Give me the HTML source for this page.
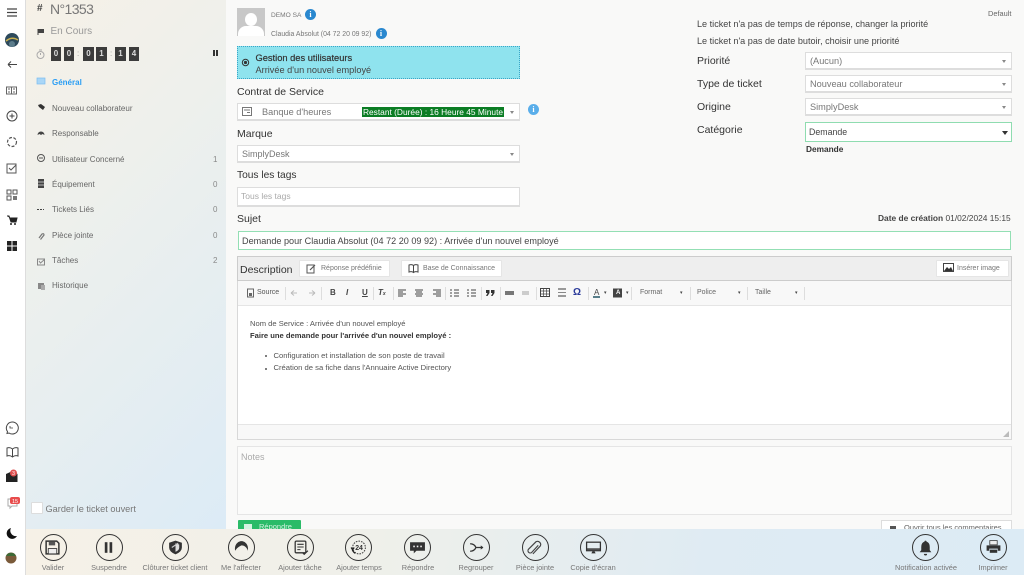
<!DOCTYPE html>
<html><head><meta charset="utf-8"><style>
html,body{margin:0;padding:0}
body{width:1024px;height:575px;overflow:hidden;position:relative;background:#f9f9f8;font-family:"Liberation Sans",sans-serif;color:#333}
.a,.t,.sel,svg.i{position:absolute}
.t{white-space:nowrap;line-height:12px}
.nav{font-size:8px;color:#666;left:52px}
.n{font-size:8px;color:#888;left:213px}
.lb{font-size:10.5px;color:#333;left:237px}
.lr{font-size:10.5px;color:#333;left:697px}
.sel{background:#fff;border:1px solid #ddd;border-bottom:2px solid #ddd;box-sizing:border-box;font-size:9.2px;color:#777;line-height:16px;padding-left:4px;white-space:nowrap}
.sel:after{content:"";position:absolute;right:5px;top:7px;border:2px solid transparent;border-top:3px solid #888;border-bottom:0}
.btn{position:absolute;background:#fff;border:1px solid #e5e5e5;box-sizing:border-box;font-size:7px;color:#777;line-height:16px;white-space:nowrap;border-radius:1px}
.c{position:absolute;top:534px;width:27px;height:27px;border:1.4px solid #333;border-radius:50%;box-sizing:border-box}
.c svg{position:absolute;left:3.600px;top:3.600px;width:17px;height:17px}
.bl{position:absolute;top:563px;font-size:7.400px;line-height:10px;color:#777;white-space:nowrap;transform:translateX(-50%)}
.tb{position:absolute;top:288px;font-size:8px;line-height:10px;color:#444;font-weight:bold;white-space:nowrap}
.sp{position:absolute;top:287px;width:1px;height:13px;background:#ddd}
.dg{position:absolute;top:47px;height:14px;background:#3c3c3c;color:#ddd;font-size:8px;font-weight:bold;line-height:14px;text-align:center}
</style></head><body>

<!-- left rail -->
<div class="a" style="left:0;top:0;width:25px;height:575px;background:#fff;border-right:1px solid #ddd"></div>
<svg class="i" style="left:0;top:0" width="25" height="575">
<path d="M7 9h10M7 12.500h10M7 16h10" stroke="#444" stroke-width="1.200" fill="none"/>
<circle cx="12" cy="40" r="7" fill="#2d4a5c"/><path d="M6 41q6-5 12-1" stroke="#c9b050" stroke-width="1.500" fill="none"/><circle cx="12" cy="44" r="3" fill="#5c7d8c"/>
<path d="M8 64.500h9M8 64.500l3-3M8 64.500l3 3" stroke="#444" fill="none"/>
<rect x="6.500" y="87" width="10" height="7" fill="none" stroke="#666"/><path d="M11.500 87v7M8 89h2M8 92h2M13 89h2M13 92h2" stroke="#666"/>
<circle cx="12" cy="116" r="5" fill="none" stroke="#444"/><path d="M9.500 116h5M12 113.500v5" stroke="#444"/>
<circle cx="12" cy="142" r="4.500" fill="none" stroke="#555" stroke-dasharray="3 1.500" stroke-width="1.200"/>
<rect x="7" y="164" width="9" height="9" fill="none" stroke="#555"/><path d="M9 168l2 2 5-5" stroke="#555" fill="none"/>
<rect x="7" y="190" width="4" height="4" fill="none" stroke="#555"/><rect x="13" y="190" width="4" height="4" fill="none" stroke="#555"/><rect x="7" y="196" width="4" height="4" fill="none" stroke="#555"/><rect x="13" y="196" width="4" height="4" fill="#777"/>
<path d="M7 216h2l2 6h5l1-4h-7" fill="#222" stroke="#222"/><circle cx="11" cy="224" r="1" fill="#222"/><circle cx="15" cy="224" r="1" fill="#222"/>
<path d="M7 241h4.500v4.500H7zM12.500 241H17v4.500h-4.500zM7 246.500h4.500V251H7zM12.500 246.500H17V251h-4.500z" fill="#222"/>
<path d="M12 422a6 6 0 1 1-3 11l-2 .5.5-2A6 6 0 0 1 12 422z" fill="none" stroke="#444"/><path d="M10 426v2h3" stroke="#444" fill="none" stroke-width=".8"/>
<path d="M7 448q3-1 5.500 1q2.500-2 5.500-1v8q-3-1-5.500 1q-2.500-2-5.500-1z M12.500 449v8" fill="none" stroke="#444"/>
<path d="M6 474l6.500-3 5 3v8H6z" fill="#222"/>
<path d="M8 499h9v7h-5l-2 2v-2H8z" fill="none" stroke="#aaa"/>
<path d="M11 528a5.500 5.500 0 1 0 6 8 5.500 5.500 0 0 1-6-8z" fill="#111"/>
<circle cx="11" cy="558" r="5.500" fill="#7a5a3a"/><path d="M6 556a5.500 5.500 0 0 1 10 0z" fill="#3c6a36"/>
<circle cx="13.500" cy="473" r="3.500" fill="#e05050"/><rect x="10" y="497" width="10" height="7" rx="2" fill="#e84c4c"/>
<text x="13.500" y="475" font-size="5" fill="#fff" text-anchor="middle" font-family="Liberation Sans">3</text>
<text x="15" y="503" font-size="5.500" fill="#fff" text-anchor="middle" font-family="Liberation Sans">15</text>
</svg>

<!-- ticket panel -->
<div class="a" style="left:26px;top:0;width:200px;height:529px;background:linear-gradient(135deg,#f6f1e7 0%,#eef0ec 35%,#dcebf6 100%)"></div>
<div class="t" style="left:37px;top:3px;font-size:10px;color:#444;font-weight:bold">#</div>
<div class="t" style="left:50px;top:2px;font-size:14px;line-height:14px;color:#777;letter-spacing:-.6px">N°1353</div>
<div class="t" style="left:50.500px;top:26px;font-size:10px;color:#999">En Cours</div>
<svg class="i" style="left:37px;top:28px" width="10" height="8"><path d="M1 1v6" stroke="#444"/><path d="M1 1h6v4H1z" fill="#444"/></svg>
<svg class="i" style="left:36px;top:49px" width="10" height="11"><circle cx="4.500" cy="6" r="3.500" fill="none" stroke="#aaa"/><path d="M3 1h3M4.500 4v2" stroke="#aaa"/></svg>
<div class="dg" style="left:51px;width:10px">0</div>
<div class="dg" style="left:64px;width:10px">0</div>
<div class="dg" style="left:83px;width:11px">0</div>
<div class="dg" style="left:96px;width:11px">1</div>
<div class="dg" style="left:115px;width:11px">1</div>
<div class="dg" style="left:129px;width:10px">4</div>
<div class="t" style="left:77px;top:48px;font-size:8px;color:#999">:</div>
<div class="t" style="left:110px;top:48px;font-size:8px;color:#999">:</div>
<div class="a" style="left:212.500px;top:50px;width:2px;height:6px;background:#333"></div>
<div class="a" style="left:216px;top:50px;width:2px;height:6px;background:#333"></div>

<div class="t nav" style="top:77px;color:#2a9df4;font-weight:bold">Général</div>
<div class="t nav" style="top:103px">Nouveau collaborateur</div>
<div class="t nav" style="top:128px">Responsable</div>
<div class="t nav" style="top:154px">Utilisateur Concerné</div>
<div class="t nav" style="top:179px">Équipement</div>
<div class="t nav" style="top:204px">Tickets Liés</div>
<div class="t nav" style="top:230px">Pièce jointe</div>
<div class="t nav" style="top:255px">Tâches</div>
<div class="t nav" style="top:280px">Historique</div>
<div class="t n" style="top:154px">1</div>
<div class="t n" style="top:179px">0</div>
<div class="t n" style="top:204px">0</div>
<div class="t n" style="top:230px">0</div>
<div class="t n" style="top:255px">2</div>
<svg class="i" style="left:36px;top:76px" width="12" height="220">
<rect x="1" y="2" width="8" height="6" fill="#a9d6f7" stroke="#7cbdf0" stroke-width=".7"/>
<path d="M2 29l3-1 4 3-2 3-4-3z" fill="#333"/>
<path d="M1.500 59a3.500 3.500 0 0 1 7 0l-2-1-1.500 1-1.500-1z" fill="#444"/>
<circle cx="5" cy="82" r="3.500" fill="none" stroke="#555"/><path d="M3 82h4" stroke="#555"/>
<rect x="2" y="103" width="6" height="9" fill="#444"/><path d="M2 106h6M2 109h6" stroke="#ddd" stroke-width=".7"/>
<path d="M1 133.500h7" stroke="#444" stroke-dasharray="2 1"/>
<path d="M3 162l3-4q2-1 2 1l-3.500 4.500" fill="none" stroke="#777" stroke-width="1.200"/>
<rect x="1.500" y="183" width="7" height="6" fill="none" stroke="#888"/><path d="M3 185l1.500 2 4-3.500" fill="none" stroke="#888"/>
<rect x="2" y="207" width="6" height="6" fill="#888"/><path d="M5 209h4v5H5z" fill="#aaa"/>
</svg>
<div class="a" style="left:31px;top:502px;width:10px;height:10px;background:#fff;border:1px solid #ddd;border-radius:1px"></div>
<div class="t" style="left:45.500px;top:503px;font-size:9.200px;color:#777">Garder le ticket ouvert</div>

<!-- customer block -->
<div class="a" style="left:237px;top:8px;width:28px;height:28px;background:#c8c8c8;overflow:hidden"><div class="a" style="left:8px;top:5px;width:12px;height:13px;background:#fff;border-radius:50%"></div><div class="a" style="left:1px;top:18px;width:26px;height:14px;background:#fff;border-radius:8px 8px 0 0"></div></div>
<div class="t" style="left:271px;top:10px;font-size:6.600px;color:#777">DEMO SA</div>
<div class="t" style="left:271px;top:29px;font-size:6.900px;color:#777">Claudia Absolut (04 72 20 09 92)</div>
<div class="a" style="left:305px;top:9px;width:11px;height:11px;background:#2a88cf;border-radius:50%;color:#fff;font:bold 8px/11px 'Liberation Serif',serif;text-align:center">i</div>
<div class="a" style="left:375.500px;top:28px;width:11px;height:11px;background:#2a88cf;border-radius:50%;color:#fff;font:bold 8px/11px 'Liberation Serif',serif;text-align:center">i</div>

<div class="a" style="left:237px;top:46px;width:283px;height:33px;background:#8fe3ee;border:1px dotted #3aa6c8;box-sizing:border-box"></div>
<div class="t" style="left:255.500px;top:52px;font-size:9.300px;color:#333;-webkit-text-stroke:.2px #333">Gestion des utilisateurs</div>
<div class="t" style="left:255.500px;top:64px;font-size:9.200px;color:#444">Arrivée d'un nouvel employé</div>
<svg class="i" style="left:241px;top:58px" width="9" height="9"><circle cx="4.500" cy="4.500" r="3.200" fill="none" stroke="#333"/><circle cx="4.500" cy="4.500" r="1.600" fill="#333"/></svg>

<div class="t lb" style="top:86px">Contrat de Service</div>
<div class="sel" style="left:237px;top:103px;width:283px;height:18px;padding-left:24px">Banque d'heures</div>
<svg class="i" style="left:242px;top:107px" width="11" height="10"><rect x=".5" y=".5" width="9" height="8" fill="none" stroke="#777"/><path d="M2 3h6M5 5.500h3" stroke="#777"/></svg>
<div class="a" style="left:362px;top:107px;width:142px;height:10px;background:#0b7d24;color:#fff;font-size:8.400px;line-height:10px;text-align:center;white-space:nowrap">Restant (Durée) : 16 Heure 45 Minute</div>
<div class="a" style="left:528px;top:104px;width:11px;height:11px;background:#5aaeea;border-radius:50%;color:#fff;font:bold 8px/11px 'Liberation Serif',serif;text-align:center">i</div>
<div class="t lb" style="top:128px">Marque</div>
<div class="sel" style="left:237px;top:145px;width:283px;height:18px;font-size:9px">SimplyDesk</div>
<div class="t lb" style="top:170px;font-size:10.200px">Tous les tags</div>
<div class="a" style="left:237px;top:187px;width:283px;height:20px;background:#fff;border:1px solid #ddd;border-bottom:2px solid #ddd;box-sizing:border-box;font-size:8.500px;line-height:17px;color:#aaa;padding-left:3px">Tous les tags</div>

<!-- right block -->
<div class="t" style="left:988px;top:8px;font-size:7.400px;color:#666">Default</div>
<div class="t" style="left:697px;top:18px;font-size:9.100px;color:#444">Le ticket n'a pas de temps de réponse, changer la priorité</div>
<div class="t" style="left:697px;top:35px;font-size:9.100px;color:#444">Le ticket n'a pas de date butoir, choisir une priorité</div>
<div class="t lr" style="top:55px">Priorité</div>
<div class="t lr" style="top:78px">Type de ticket</div>
<div class="t lr" style="top:101px">Origine</div>
<div class="t lr" style="top:124px">Catégorie</div>
<div class="sel" style="left:805px;top:52px;width:207px;height:18px">(Aucun)</div>
<div class="sel" style="left:805px;top:75px;width:207px;height:18px">Nouveau collaborateur</div>
<div class="sel" style="left:805px;top:98px;width:207px;height:18px">SimplyDesk</div>
<div class="a" style="left:805px;top:122px;width:207px;height:20px;background:#fff;border:1px solid #8fdcb0;box-sizing:border-box;font-size:8.800px;line-height:19px;color:#444;padding-left:3px">Demande</div>
<div class="a" style="left:1002px;top:131px;border:3px solid transparent;border-top:4px solid #333;border-bottom:0"></div>
<div class="t" style="left:806px;top:143px;font-size:8.300px;color:#333;font-weight:bold">Demande</div>
<div class="t" style="left:878px;top:212px;font-size:8.400px;color:#444"><b>Date de création</b> 01/02/2024 15:15</div>

<!-- subject -->
<div class="t lb" style="top:213px">Sujet</div>
<div class="a" style="left:238px;top:231px;width:773px;height:19px;background:#fff;border:1px solid #93dfb4;box-sizing:border-box;font-size:9.100px;line-height:18px;color:#444;padding-left:3px;white-space:nowrap">Demande pour Claudia Absolut (04 72 20 09 92) : Arrivée d'un nouvel employé</div>

<!-- editor -->
<div class="a" style="left:237px;top:256px;width:775px;height:184px;border:1px solid #d8d8d8;box-sizing:border-box;background:#fff"></div>
<div class="a" style="left:237px;top:256px;width:775px;height:25px;background:#eee;border:1px solid #ccc;box-sizing:border-box"></div>
<div class="a" style="left:238px;top:281px;width:773px;height:25px;background:#f8f8f8;border-bottom:1px solid #e5e5e5;box-sizing:border-box"></div>
<div class="a" style="left:238px;top:424px;width:773px;height:15px;background:#f8f8f8;border-top:1px solid #e5e5e5;box-sizing:border-box"></div>
<div class="t" style="left:240px;top:264px;font-size:10.500px;color:#333">Description</div>
<div class="btn" style="left:299px;top:260px;width:91px;height:17px;padding-left:21px">Réponse prédéfinie</div>
<div class="btn" style="left:401px;top:260px;width:101px;height:17px;padding-left:21px">Base de Connaissance</div>
<div class="btn" style="left:936px;top:260px;width:73px;height:17px;padding-left:20px">Insérer image</div>
<svg class="i" style="left:306px;top:263px" width="12" height="11"><rect x="1" y="2" width="7" height="8" fill="none" stroke="#555"/><path d="M4 7l5-5" stroke="#555" stroke-width="1.200"/></svg>
<svg class="i" style="left:408px;top:263px" width="12" height="11"><path d="M1 2q3-1 4.500 .5Q7 1 10 2v7q-3-1-4.500 .5Q4 8 1 9zM5.500 2.500v7" fill="none" stroke="#444"/></svg>
<svg class="i" style="left:943px;top:263px" width="12" height="10"><rect x=".5" y=".5" width="10" height="8" fill="none" stroke="#444"/><path d="M1 8l3-4 2 2 2-2 2 4z" fill="#333"/></svg>

<!-- toolbar -->
<svg class="i" style="left:238px;top:282px" width="570" height="22">
<rect x="9.500" y="7" width="6" height="8" fill="none" stroke="#666"/><path d="M11 11h3v3h-3z" fill="#666"/>
<path d="M53 11h6M53 11l3-2.500M53 11l3 2.500M77 11h-6M77 11l-3-2.500M77 11l-3 2.500" stroke="#bbb" fill="none"/>
<path d="M160 8h8M160 10h5M160 12h8M160 14h5M177 8h8M178 10h6M177 12h8M178 14h6M195 8h8M198 10h5M195 12h8M198 14h5" stroke="#444"/>
<path d="M212 8h2M216 8h5M212 11h2M216 11h5M212 14h2M216 14h5M229 8h2M233 8h5M229 11h2M233 11h5M229 14h2M233 14h5" stroke="#444"/>
<path d="M248 8h3.500v3l-2 3h-1.500l1.500-3h-1.500zM253 8h3.500v3l-2 3h-1.500l1.500-3H253z" fill="#333"/>
<path d="M267 9h9v4h-9z" fill="#777"/><path d="M284 9h7v4h-7z" fill="#ccc"/>
<rect x="302.500" y="6.500" width="9" height="8" fill="#fff" stroke="#444"/><path d="M302.500 9h9M302.500 12h9M305.500 6.500v8M308.500 6.500v8" stroke="#444" stroke-width=".7"/>
<path d="M320 6h8v2h-8zM320 13h8v2h-8z" fill="#999"/><path d="M320 10.500h8" stroke="#888"/>
<path d="M355 15h7" stroke="#256" stroke-width="1.500"/>
<rect x="375" y="6.500" width="9" height="9" fill="#444"/>
</svg>
<div class="tb" style="left:257px;font-weight:normal;font-size:7px;color:#555">Source</div>
<div class="tb" style="left:330px">B</div>
<div class="tb" style="left:346px;font-style:italic">I</div>
<div class="tb" style="left:362px;text-decoration:underline">U</div>
<div class="tb" style="left:378px;font-style:italic">T<span style="font-size:5px">x</span></div>
<div class="tb" style="left:573px;color:#2a3a9a;font-size:10px">Ω</div>
<div class="tb" style="left:594px;font-weight:normal">A</div>
<div class="tb" style="left:604px;font-size:5px;font-weight:normal">▾</div>
<div class="tb" style="left:626px;font-size:5px;font-weight:normal">▾</div>
<div class="tb" style="left:616px;font-size:6px;color:#fff">A</div>
<div class="tb" style="left:640px;font-weight:normal;font-size:7px;color:#666">Format</div>
<div class="tb" style="left:680px;font-size:5px;font-weight:normal">▾</div>
<div class="tb" style="left:697px;font-weight:normal;font-size:7px;color:#666">Police</div>
<div class="tb" style="left:738px;font-size:5px;font-weight:normal">▾</div>
<div class="tb" style="left:755px;font-weight:normal;font-size:7px;color:#666">Taille</div>
<div class="tb" style="left:795px;font-size:5px;font-weight:normal">▾</div>
<div class="sp" style="left:285px"></div><div class="sp" style="left:321px"></div><div class="sp" style="left:373px"></div><div class="sp" style="left:393px"></div><div class="sp" style="left:445px"></div><div class="sp" style="left:481px"></div><div class="sp" style="left:500px"></div><div class="sp" style="left:536px"></div><div class="sp" style="left:588px"></div><div class="sp" style="left:631px"></div><div class="sp" style="left:690px"></div><div class="sp" style="left:747px"></div><div class="sp" style="left:804px"></div>

<!-- editor content -->
<div class="t" style="left:250px;top:318px;font-size:7.600px;color:#555">Nom de Service : Arrivée d'un nouvel employé</div>
<div class="t" style="left:250px;top:330px;font-size:7.600px;color:#333;font-weight:bold">Faire une demande pour l'arrivée d'un nouvel employé :</div>
<div class="t" style="left:273.500px;top:350px;font-size:7.650px;color:#555">Configuration et installation de son poste de travail</div>
<div class="t" style="left:273.500px;top:362px;font-size:7.650px;color:#555">Création de sa fiche dans l'Annuaire Active Directory</div>
<div class="a" style="left:265px;top:355px;width:2px;height:2px;border-radius:50%;background:#555"></div>
<div class="a" style="left:265px;top:368px;width:2px;height:2px;border-radius:50%;background:#555"></div>
<svg class="i" style="left:1002px;top:430px" width="9" height="8"><path d="M1 7l6-6v6z" fill="#bbb"/></svg>

<!-- notes -->
<div class="a" style="left:237px;top:446px;width:775px;height:69px;background:#fbfbfa;border:1px solid #e5e5e5;box-sizing:border-box;font-size:9px;line-height:20px;color:#aaa;padding-left:3px">Notes</div>
<div class="a" style="left:238px;top:520px;width:63px;height:12px;background:#2abb68;border-radius:1px 1px 0 0;color:#d5f2e1;font-size:7.500px;line-height:14px;padding-left:21px;box-sizing:border-box">Répondre</div>
<div class="a" style="left:244px;top:524px;width:8px;height:5px;background:#d5f2e1"></div>
<div class="a" style="left:881px;top:520px;width:131px;height:12px;background:#fff;border:1px solid #ddd;box-sizing:border-box;font-size:7.500px;line-height:14px;color:#666;padding-left:22px;white-space:nowrap">Ouvrir tous les commentaires</div>
<div class="a" style="left:890px;top:526px;width:6px;height:3px;background:#555"></div>

<!-- bottom bar -->
<div class="a" style="left:26px;top:529px;width:998px;height:46px;background:linear-gradient(100deg,#f6f1e7 0%,#eff0ea 35%,#dfebf3 68%,#dcebf5 100%)"></div>

<div class="c" style="left:39.500px"><svg viewBox="0 0 16 16"><path d="M2 2h10l2 2v10H2z" fill="none" stroke="#333" stroke-width="1.400"/><rect x="4.500" y="2.500" width="6" height="3.500" fill="#555"/><rect x="4" y="9" width="8" height="5" fill="#eee" stroke="#333" stroke-width=".8"/></svg></div>
<div class="c" style="left:95.500px"><svg viewBox="0 0 16 16"><rect x="4.500" y="3" width="2.500" height="10" fill="#333"/><rect x="9" y="3" width="2.500" height="10" fill="#333"/></svg></div>
<div class="c" style="left:162px"><svg viewBox="0 0 16 16"><path d="M8 1.500l6 2v4.500q0 4-6 6.500-6-2.500-6-6.500V3.500z" fill="#333"/><path d="M8 4l3.500 1.200v3q0 2.300-3.500 3.800z" fill="#ddd"/><path d="M4.500 8l6-4" stroke="#ccc" stroke-width="1"/></svg></div>
<div class="c" style="left:228px"><svg viewBox="0 0 16 16"><path d="M2 11c-1-6 3-9 6-9s7 3 6 9c-1-3-3-5-6-5-2 1-4 2-6 5z" fill="#333"/></svg></div>
<div class="c" style="left:287px"><svg viewBox="0 0 16 16"><rect x="3" y="2" width="10" height="11" rx="1" fill="none" stroke="#333" stroke-width="1.200"/><path d="M5 5h6M5 7.500h6M5 10h3" stroke="#333"/><path d="M10 13l1.500 1.500L15 11" stroke="#333" fill="none"/></svg></div>
<div class="c" style="left:345px"><svg viewBox="0 0 16 16"><circle cx="8.500" cy="8" r="6" fill="none" stroke="#444" stroke-dasharray="1.500 1"/><path d="M2 9a6 6 0 0 0 3 4.500M1 8l1.500 2L4 8" stroke="#222" fill="none" stroke-width="1.200"/><text x="8.500" y="10.500" font-size="6.500" text-anchor="middle" fill="#333" font-family="Liberation Sans" font-weight="bold">24</text></svg></div>
<div class="c" style="left:404px"><svg viewBox="0 0 16 16"><path d="M1 3h14v8H7l-2.500 2.500V11H1z" fill="#333"/><path d="M4 7h1.500M7.300 7h1.500M10.600 7h1.500" stroke="#eee" stroke-width="1.500"/></svg></div>
<div class="c" style="left:463px"><svg viewBox="0 0 16 16"><path d="M2 4.500q4 0 5.500 3.500Q6 11.500 2 11.500M7.500 8H14" fill="none" stroke="#333" stroke-width="1.200"/><path d="M12 6l2.500 2-2.500 2z" fill="#333"/></svg></div>
<div class="c" style="left:521.500px"><svg viewBox="0 0 16 16"><path d="M12.500 6L6.500 12.500a2 2 0 0 1-3-3L10.500 2.500a3 3 0 0 1 4 4L7.500 14" fill="none" stroke="#444" stroke-width="1.100" transform="translate(-1,0)"/></svg></div>
<div class="c" style="left:580px"><svg viewBox="0 0 16 16"><rect x="1.500" y="3" width="13" height="8" fill="none" stroke="#333" stroke-width="1.200"/><path d="M1.500 9.500h13" stroke="#333" stroke-width="1.400"/><path d="M6 13.500h4l-1-2H7z" fill="#333"/></svg></div>
<div class="c" style="left:912px"><svg viewBox="0 0 16 16"><path d="M8 1.500q1 0 1 1 3 1 3 5v3l1.500 2h-11L4 10.500v-3q0-4 3-5 0-1 1-1z" fill="#333"/><path d="M6.500 14h3a1.500 1.500 0 0 1-3 0z" fill="#333"/></svg></div>
<div class="c" style="left:980px"><svg viewBox="0 0 16 16"><rect x="4.500" y="1.500" width="7" height="4" fill="#eee" stroke="#444" stroke-width=".8"/><path d="M1.500 6h13v5h-2.500V9H4v2H1.500z" fill="#333"/><rect x="4.500" y="10" width="7" height="3" fill="#333"/></svg></div>

<div class="bl" style="left:53px">Valider</div>
<div class="bl" style="left:109px">Suspendre</div>
<div class="bl" style="left:175px">Clôturer ticket client</div>
<div class="bl" style="left:241px">Me l'affecter</div>
<div class="bl" style="left:300px">Ajouter tâche</div>
<div class="bl" style="left:359px">Ajouter temps</div>
<div class="bl" style="left:418px">Répondre</div>
<div class="bl" style="left:476px">Regrouper</div>
<div class="bl" style="left:535px">Pièce jointe</div>
<div class="bl" style="left:593px">Copie d'écran</div>
<div class="bl" style="left:926px">Notification activée</div>
<div class="bl" style="left:993px">Imprimer</div>
</body></html>
